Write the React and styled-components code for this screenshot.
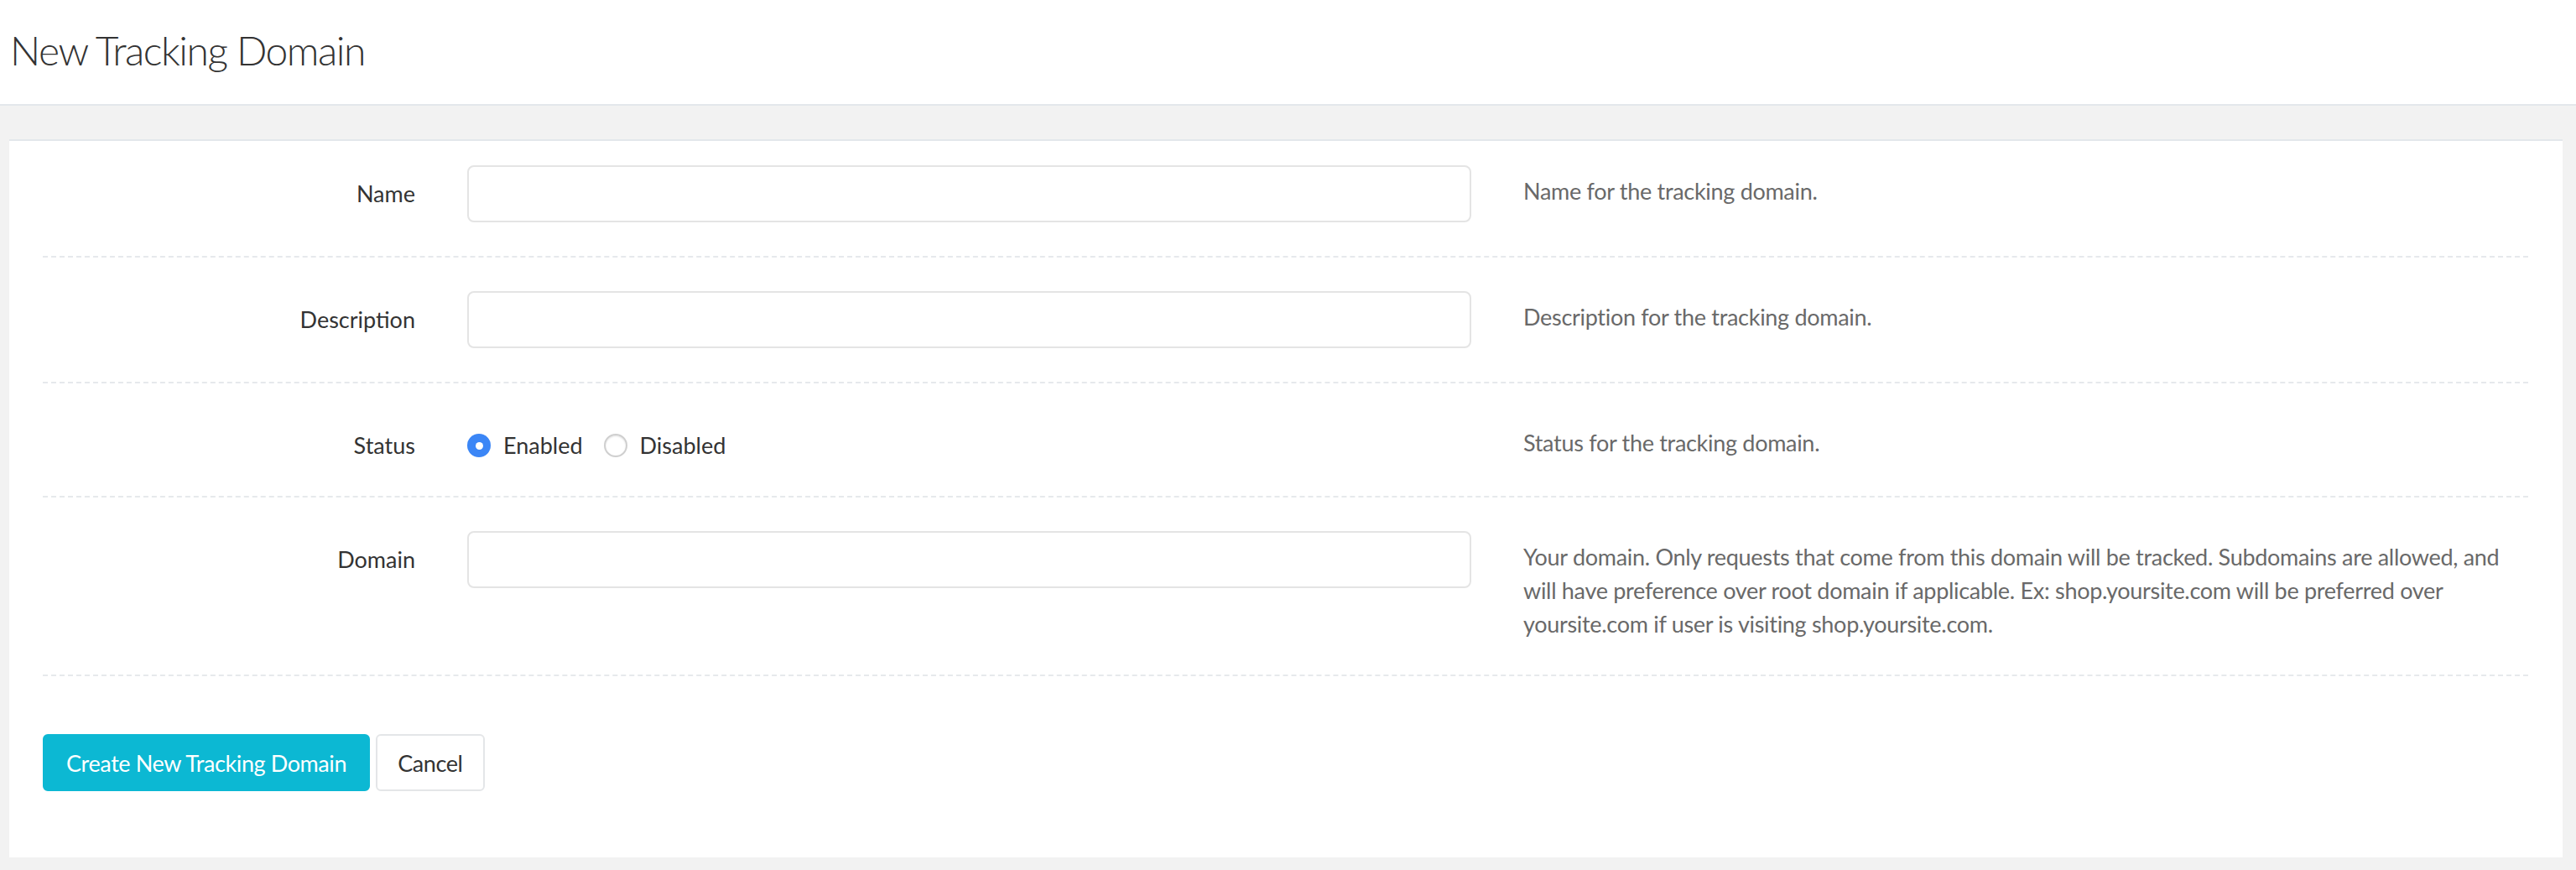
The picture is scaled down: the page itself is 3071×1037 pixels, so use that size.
import React from 'react';
import styled, { createGlobalStyle } from 'styled-components';

const GlobalStyle = createGlobalStyle`
  html, body {
    margin: 0;
    padding: 0;
    background: #f2f2f2;
    font-family: Lato, "Open Sans", sans-serif;
  }
  * { box-sizing: border-box; }
`;

const Page = styled.div`
  min-height: 100vh;
  background: #f2f2f2;
  display: flex;
  flex-direction: column;
`;

const Header = styled.header`
  height: 126px;
  background: #ffffff;
  border-bottom: 2px solid #e3e7eb;
  padding: 32px 0 0 12px;
`;

const Title = styled.h1`
  margin: 0;
  font-size: 48px;
  font-weight: 300;
  color: #333333;
  line-height: 56px;
  letter-spacing: -1.5px;
`;

const Card = styled.main`
  margin: 40px 16px 14px 11px;
  background: #ffffff;
  border-top: 2px solid #e3e7eb;
  padding: 0 41px 79px 40px;
`;

const Row = styled.div`
  display: grid;
  grid-template-columns: 444px 1197px 1fr;
  column-gap: 62px;
  align-items: start;
  padding: ${p => (p.$first ? '29px' : '40px')} 0 40px;
  border-bottom: 2px dashed #e6e9ec;
`;

const Label = styled.label`
  text-align: right;
  padding-top: 14px;
  font-size: 27px;
  line-height: 40px;
  color: #333333;
`;

const TextInput = styled.input`
  width: 100%;
  height: 68px;
  border: 2px solid #e4e4e4;
  border-radius: 8px;
  padding: 0 22px;
  font: inherit;
  font-size: 27px;
  outline: none;
  background: #ffffff;
`;

const Help = styled.p`
  margin: 0;
  padding-top: 11px;
  font-size: 27px;
  line-height: 40px;
  color: #696969;
  letter-spacing: -0.3px;
`;

const RadioGroup = styled.div`
  display: flex;
  align-items: center;
  padding-top: 14px;
  height: 54px;
  gap: 25px;
`;

const RadioOption = styled.label`
  display: flex;
  align-items: center;
  gap: 15px;
  font-size: 27px;
  line-height: 40px;
  color: #333333;
  cursor: pointer;
`;

const RadioDot = styled.span`
  width: 28px;
  height: 28px;
  border-radius: 50%;
  flex-shrink: 0;
  background: ${p => (p.$checked ? '#3b86f6' : '#ffffff')};
  border: ${p => (p.$checked ? 'none' : '2px solid #cfcfcf')};
  box-shadow: ${p => (p.$checked ? 'none' : 'inset 0 1px 2px rgba(0,0,0,0.12)')};
  display: flex;
  align-items: center;
  justify-content: center;

  &::after {
    content: '';
    display: ${p => (p.$checked ? 'block' : 'none')};
    width: 9px;
    height: 9px;
    border-radius: 50%;
    background: #ffffff;
  }
`;

const Actions = styled.div`
  display: flex;
  gap: 7px;
  padding-top: 69px;
`;

const Button = styled.button`
  height: 68px;
  padding: 0 ${p => (p.$primary ? '26px' : '24px')};
  font: inherit;
  font-size: 27px;
  letter-spacing: -0.4px;
  border-radius: 6px;
  cursor: pointer;
  background: ${p => (p.$primary ? '#0cb8d3' : '#ffffff')};
  color: ${p => (p.$primary ? '#ffffff' : '#333333')};
  border: 2px solid ${p => (p.$primary ? '#0cb8d3' : '#e4e6e8')};
`;

const fields = [
  { label: 'Name', help: 'Name for the tracking domain.', type: 'text' },
  { label: 'Description', help: 'Description for the tracking domain.', type: 'text' },
  { label: 'Status', help: 'Status for the tracking domain.', type: 'radio' },
  {
    label: 'Domain',
    help: 'Your domain. Only requests that come from this domain will be tracked. Subdomains are allowed, and will have preference over root domain if applicable. Ex: shop.yoursite.com will be preferred over yoursite.com if user is visiting shop.yoursite.com.',
    type: 'text',
  },
];

export default function App() {
  const [status, setStatus] = React.useState('enabled');

  return (
    <Page>
      <GlobalStyle />
      <Header>
        <Title>New Tracking Domain</Title>
      </Header>
      <Card>
        {fields.map((f, i) => (
          <Row key={f.label} $first={i === 0}>
            <Label>{f.label}</Label>
            {f.type === 'radio' ? (
              <RadioGroup>
                <RadioOption onClick={() => setStatus('enabled')}>
                  <RadioDot $checked={status === 'enabled'} />
                  Enabled
                </RadioOption>
                <RadioOption onClick={() => setStatus('disabled')}>
                  <RadioDot $checked={status === 'disabled'} />
                  Disabled
                </RadioOption>
              </RadioGroup>
            ) : (
              <TextInput type="text" />
            )}
            <Help>{f.help}</Help>
          </Row>
        ))}
        <Actions>
          <Button $primary>Create New Tracking Domain</Button>
          <Button>Cancel</Button>
        </Actions>
      </Card>
    </Page>
  );
}
